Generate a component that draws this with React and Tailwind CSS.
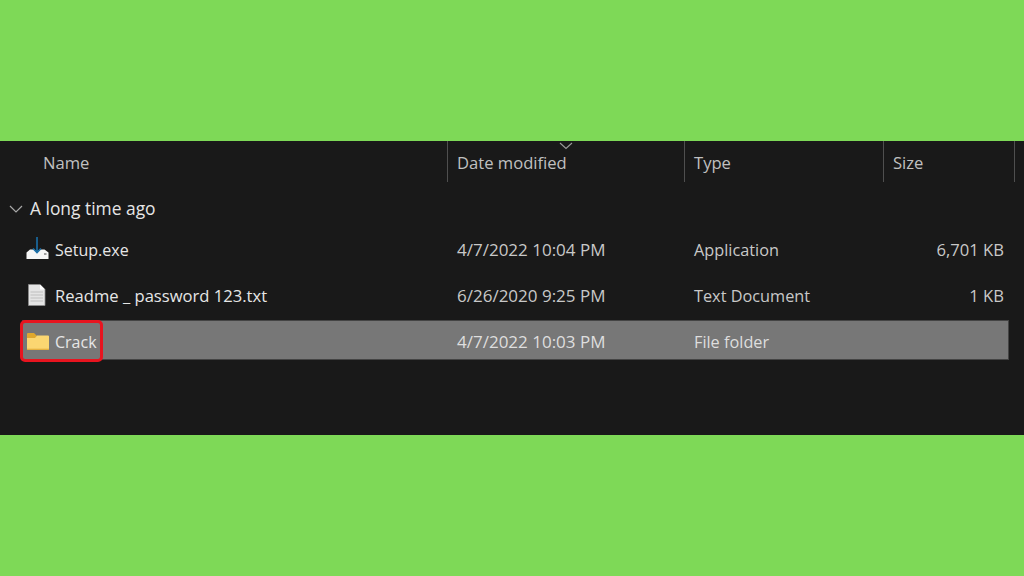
import React from "react";

const font = { fontFamily: '"Open Sans", "Noto Sans", sans-serif' };

const files = [
  { name: "Setup.exe", nameSize: "text-[16px]", date: "4/7/2022 10:04 PM", type: "Application", size: "6,701 KB", icon: "setup" },
  { name: "Readme _ password 123.txt", nameSize: "text-[16.6px]", date: "6/26/2020 9:25 PM", type: "Text Document", size: "1 KB", icon: "text" },
  { name: "Crack", nameSize: "text-[16px]", date: "4/7/2022 10:03 PM", type: "File folder", size: "", icon: "folder", selected: true },
];

function SetupIcon() {
  return (
    <svg width="24" height="24" viewBox="0 0 24 24" className="shrink-0 overflow-visible">
      <path d="M0.5 14.5 L4 11.5 H8.5 L11 14 L13.5 11.5 H18.5 L22.5 14.5 V21 H0.5 Z" fill="#f6f6f6" />
      <rect x="18" y="15" width="2.5" height="2" fill="#a0a0a0" />
      <path d="M11 -1 V14.5 M7 10.5 L11 14.5 L15 10.5" stroke="#1a6fa8" strokeWidth="1.6" fill="none" />
    </svg>
  );
}

function TextIcon() {
  return (
    <svg width="24" height="24" viewBox="0 0 24 24" className="shrink-0">
      <path d="M2.5 0.5 H14 L19 5.5 V21.5 H2.5 Z" fill="#e4e4e4" stroke="#8c8c8c" strokeWidth="0.8" />
      <path d="M14 0.5 V5.5 H19 Z" fill="#ffffff" />
      <path d="M4.5 8 H17 M4.5 11 H17 M4.5 14 H17 M4.5 17 H17" stroke="#b4b4b4" strokeWidth="0.8" />
    </svg>
  );
}

function FolderIcon() {
  return (
    <svg width="24" height="24" viewBox="0 0 24 24" className="shrink-0">
      <path d="M1 4 Q1 3 2 3 H8 L10.5 5.5 V8 H1 Z" fill="#e0a82e" />
      <path d="M1 8 L9 8 L11 5.5 H22 Q23 5.5 23 6.5 V19 Q23 20 22 20 H2 Q1 20 1 19 Z" fill="#fbd671" />
      <path d="M1 19.3 H23" stroke="#e3ad3c" strokeWidth="1.2" />
    </svg>
  );
}

const icons = { setup: <SetupIcon />, text: <TextIcon />, folder: <FolderIcon /> };

function HeaderCell({ label }) {
  return (
    <div className="flex h-[41px] items-center border-l border-[#4f4f4f] pl-[9px] pt-[4px]">
      {label}
    </div>
  );
}

function FileRow({ file }) {
  const rowClass = file.selected
    ? "bg-[#777777] outline outline-1 -outline-offset-1 outline-[#444444] text-[#dedede]"
    : "text-[#c8c8c8]";
  return (
    <div className={`relative ml-[22px] mr-[15px] grid h-[40px] grid-cols-[425px_237px_199px_126px] items-center pt-[4px] ${rowClass}`}>
      <div className={`flex items-center gap-[5px] pl-[4px] text-[#e6e6e6] ${file.nameSize}`}>
        {icons[file.icon]}
        <span className="whitespace-nowrap">{file.name}</span>
      </div>
      <div className="whitespace-nowrap pb-[2px] pl-[10px] text-[17px]">{file.date}</div>
      <div className="pl-[10px] text-[16.3px]">{file.type}</div>
      <div className="pr-[5px] text-right">{file.size}</div>
      {file.selected && (
        <div className="absolute -left-[2px] top-0 h-[42px] w-[83px] rounded-[5px] border-[3px] border-[#e8141f]" />
      )}
    </div>
  );
}

export default function App() {
  return (
    <div className="flex h-[576px] w-[1024px] flex-col overflow-hidden bg-[#7ed957]" style={font}>
      <div className="h-[141px] shrink-0" />
      <div className="relative h-[294px] shrink-0 bg-[#191919] text-[16.6px] leading-none">
        {/* Column headers */}
        <div className="grid grid-cols-[447px_237px_199px_131px_10px] text-[#c0c0c0]">
          <div className="flex h-[41px] items-center pl-[43px] pt-[4px]">Name</div>
          <HeaderCell label="Date modified" />
          <HeaderCell label="Type" />
          <HeaderCell label="Size" />
          <div className="h-[41px] border-l border-[#4f4f4f]" />
        </div>
        {/* Sort arrow */}
        <svg width="14" height="8" viewBox="0 0 14 8" className="absolute left-[559px] top-[1px]">
          <path d="M1 1 L7 6.5 L13 1" stroke="#9a9a9a" strokeWidth="1.1" fill="none" />
        </svg>

        {/* Group heading */}
        <div className="flex h-[46px] items-center gap-[7px] pl-[9px] pt-[8px] text-[17.4px] text-[#e6e6e6]">
          <svg width="14" height="8" viewBox="0 0 14 8">
            <path d="M1 1 L7 7 L13 1" stroke="#a8a8a8" strokeWidth="1.2" fill="none" />
          </svg>
          <span>A long time ago</span>
        </div>

        {/* Files */}
        <div className="flex flex-col gap-[6px]">
          {files.map((file) => (
            <FileRow key={file.name} file={file} />
          ))}
        </div>
      </div>
      <div className="flex-1" />
    </div>
  );
}
